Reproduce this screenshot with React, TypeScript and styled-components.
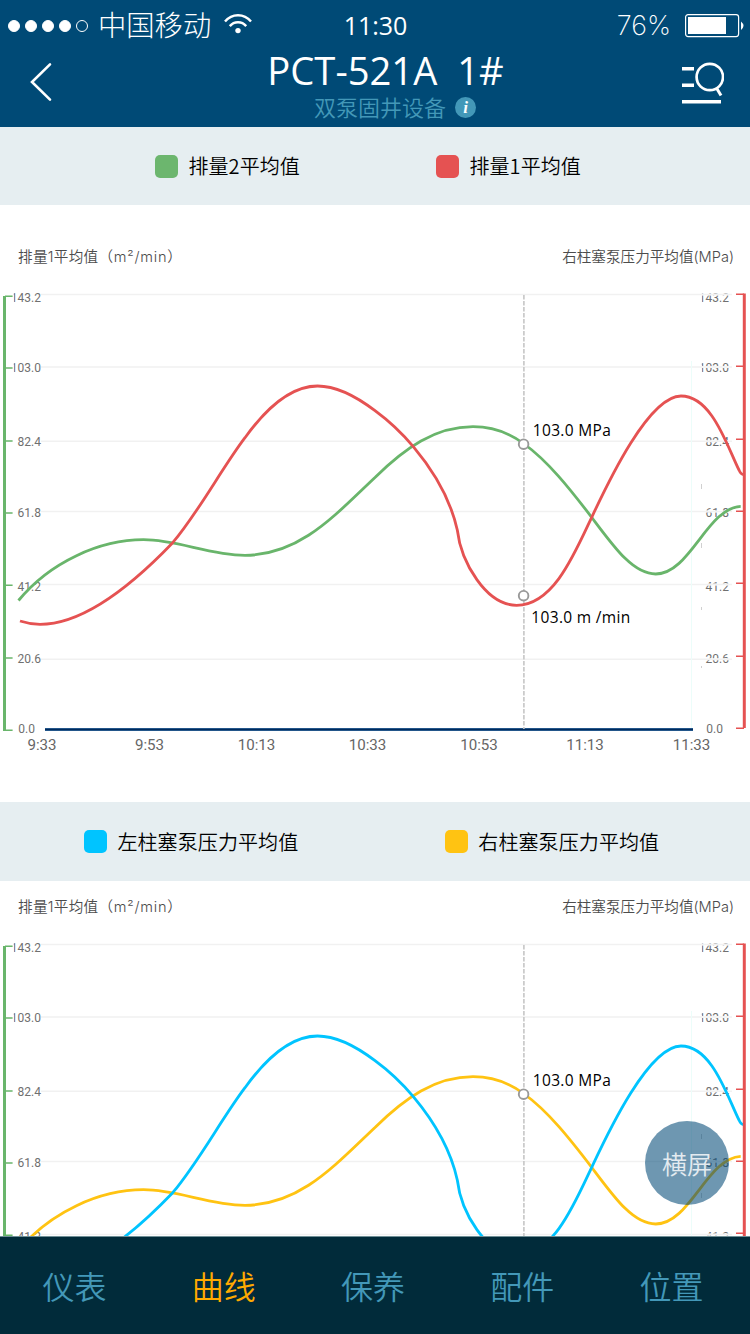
import React from "react";
import styled, { createGlobalStyle } from "styled-components";

const GlobalStyle = createGlobalStyle`
  * { box-sizing: border-box; }
  body { margin: 0; background: #fff; }
`;

const cjk = `"Noto Sans CJK SC", sans-serif`;
const latin = `"Open Sans", "Noto Sans", "Noto Sans CJK SC", sans-serif`;

const Screen = styled.div`
  position: relative;
  display: flex;
  flex-direction: column;
  width: 750px;
  height: 1334px;
  overflow: hidden;
  background: #fff;
  font-family: ${cjk};
`;

const Header = styled.header`
  flex: none;
  height: 127px;
  background: #004a76;
  color: #fff;
`;

const StatusBar = styled.div`
  display: grid;
  grid-template-columns: 1fr auto 1fr;
  align-items: center;
  height: 51px;
  padding: 0 6px 0 8px;
`;

const StatusGroup = styled.div<{ $end?: boolean }>`
  display: flex;
  align-items: center;
  justify-content: ${(p) => (p.$end ? "flex-end" : "flex-start")};
`;

const Signal = styled.div`
  display: flex;
  gap: 5px;
  margin-right: 10px;
`;

const SignalDot = styled.span<{ $on: boolean }>`
  width: 12px;
  height: 12px;
  border: 1px solid #fff;
  border-radius: 50%;
  background: ${(p) => (p.$on ? "#fff" : "transparent")};
`;

const Carrier = styled.span`
  margin-right: 13px;
  padding-bottom: 3px;
  font-size: 28.3px;
  font-weight: 300;
  line-height: 40px;
`;

const Clock = styled.span`
  padding: 0 1px 2px 0;
  font-family: ${latin};
  font-size: 25px;
  line-height: 40px;
`;

const Percent = styled.span`
  margin-right: 14px;
  font-family: Inter, sans-serif;
  font-size: 27px;
  font-weight: 200;
  line-height: 40px;
`;

const TitleBar = styled.div`
  display: grid;
  grid-template-columns: 90px 1fr 90px;
  height: 76px;
`;

const IconButton = styled.button<{ $end?: boolean }>`
  display: flex;
  align-items: flex-start;
  justify-content: ${(p) => (p.$end ? "flex-end" : "flex-start")};
  padding: ${(p) => (p.$end ? "10px 26px 0 0" : "10px 0 0 28px")};
  border: 0;
  background: none;
`;

const TitleBlock = styled.div`
  display: flex;
  flex-direction: column;
  align-items: center;
  padding-left: 21px;
`;

const Title = styled.h1`
  margin: 0;
  font-family: ${latin};
  font-size: 38.2px;
  font-weight: 400;
  line-height: 39px;
  white-space: pre;
`;

const Subtitle = styled.div`
  display: flex;
  align-items: center;
  gap: 9px;
  padding-left: 19px;
  color: #4398b8;
  font-size: 22px;
  font-weight: 350;
  line-height: 32px;
`;

const InfoBadge = styled.span`
  display: flex;
  align-items: center;
  justify-content: center;
  width: 21px;
  height: 21px;
  margin-top: 2px;
  border-radius: 50%;
  background: #4398b8;
  color: #fff;
  font: italic bold 17px/21px "Liberation Serif", serif;
`;

const Content = styled.main`
  flex: 1;
  min-height: 0;
  overflow: hidden;
`;

const Legend = styled.div<{ $height: number; $left: number; $gap: number }>`
  display: flex;
  align-items: center;
  gap: ${(p) => p.$gap}px;
  height: ${(p) => p.$height}px;
  padding-left: ${(p) => p.$left}px;
  background: #e6eef1;
`;

const LegendItem = styled.div`
  display: flex;
  align-items: center;
  gap: 10.4px;
  color: #000;
  font-size: 20px;
  font-weight: 350;
  letter-spacing: 0.1px;
  line-height: 30px;
  white-space: nowrap;
`;

const Swatch = styled.span<{ $color: string }>`
  width: 23px;
  height: 23px;
  border-radius: 5px;
  background: ${(p) => p.$color};
`;

const ChartPanel = styled.section<{ $top: number }>`
  display: flex;
  flex-direction: column;
  padding: ${(p) => p.$top}px 0 42px;
  background: #fff;
`;

const AxisTitles = styled.div`
  display: flex;
  justify-content: space-between;
  height: 35px;
  padding: 1px 16px 0 18px;
  color: #4c4c4c;
  font-family: Inter, ${cjk};
  font-size: 14.6px;
  font-weight: 350;
  line-height: 22px;
  white-space: nowrap;
`;

const Quantity = styled.span`
  letter-spacing: 0.3px;
`;

const Unit = styled.span`
  letter-spacing: 0.75px;
`;

const Plot = styled.svg`
  display: block;
  width: 750px;
  height: 480px;
`;

const TickText = styled.text`
  fill: #707070;
  font: 12px Roboto, sans-serif;
`;

const TimeText = styled.text`
  fill: #666;
  font: 15.1px Roboto, sans-serif;
  text-anchor: middle;
`;

const ValueText = styled.text`
  fill: #000;
  font: 15.5px ${latin};
`;

const TabBar = styled.nav`
  flex: none;
  display: flex;
  height: 98px;
  padding-right: 4px;
  border-top: 1px solid #6f8f96;
  background: #012b3a;
`;

const Tab = styled.a<{ $active?: boolean }>`
  flex: 1 0 0;
  color: ${(p) => (p.$active ? "#ffaa00" : "#4398b8")};
  font-size: 32px;
  font-weight: 350;
  line-height: 97px;
  text-align: center;
`;

const RotateButton = styled.button`
  position: absolute;
  top: 1121px;
  left: 645px;
  width: 84px;
  height: 84px;
  padding: 0;
  border: 0;
  border-radius: 50%;
  background: rgba(0, 72, 117, 0.57);
  color: #e4ebf0;
  font-family: ${cjk};
  font-size: 25px;
  font-weight: 350;
  line-height: 81px;
`;

const FALLING =
  "M18.5 600.5C50 562 100 539.7 143.5 539.7C178 539.7 209 555.3 245 555.3C300 555.3 335 515 375 477.5C405 448 435 426.7 473 426.7C495 426.7 510 433.5 523.5 443.5C548 461 570 489 591.7 517.3C614 547 633 574 655.7 574C690 574 707 508 740.7 506.3";
const RISING =
  "M20 621C26 623 33 624.3 40 624.3C85 624.3 135 582 172.7 542.7C198 513 222 468 245 437.7C270 403 294 386 317.5 386C337 386 357 397 375 410.7C389 421 401 432 413.3 446.7C432 469 450 497 457.3 530C461 562 486 605.3 516.7 605.3C553 605.3 574 555 591.7 517.3C606 487 648 396 681 396C712 396 727 446 739 470Q741 474.6 743.5 474.6";

const TICKS = [
  { label: "143.2", left: 296.3, right: 294.3, grid: 294.5, base: 302 },
  { label: "103.0", left: 368, right: 366.3, grid: 367, base: 372.3 },
  { label: "82.4", left: 441, right: 439.3, grid: 441.3, base: 446.3 },
  { label: "61.8", left: 513, right: 511.3, grid: 511.5, base: 517.3 },
  { label: "41.2", left: 585.3, right: 583.3, grid: 584.5, base: 590.5 },
  { label: "20.6", left: 658, right: 656.3, grid: 659.3, base: 662.7 },
  { label: "0.0", left: 730.3, right: 728.3, grid: 0, base: 733 },
];

const TIMES: [string, number][] = [
  ["9:33", 42],
  ["9:53", 149.5],
  ["10:13", 256.5],
  ["10:33", 367.5],
  ["10:53", 479],
  ["11:13", 585],
  ["11:33", 691.5],
];

interface ChartProps {
  id: string;
  top: number;
  pressure: string;
  flow: string;
}

function Chart({ id, top, pressure, flow }: ChartProps) {
  return (
    <ChartPanel $top={top}>
      <AxisTitles>
        <Quantity>
          排量1平均值<Unit>（m²/min）</Unit>
        </Quantity>
        <span>右柱塞泵压力平均值(MPa)</span>
      </AxisTitles>
      <Plot viewBox="0 280 750 480">
        <defs>
          <clipPath id={`${id}-labels`}>
            <rect x="13.8" y="280" width="40" height="480" />
            <rect x="701.8" y="280" width="40" height="480" />
          </clipPath>
        </defs>
        <g clipPath={`url(#${id}-labels)`}>
          {TICKS.map((t) => {
            const shift = t.label === "0.0" ? 6 : 0;
            return (
              <g key={t.label} textAnchor="end">
                <TickText x={40.9 - shift} y={t.base}>{t.label}</TickText>
                <TickText x={728.9 - shift} y={t.base}>{t.label}</TickText>
              </g>
            );
          })}
        </g>
        {TICKS.filter((t) => t.grid).map((t) => (
          <g key={t.label}>
            <path d={`M700 ${t.grid}H732`} stroke="#fff" strokeWidth="2" />
            <path d={`M41 ${t.grid}H732`} stroke="#f1f1f1" strokeWidth="1.4" />
          </g>
        ))}
        <path d="M691.5 361V728" stroke="#ecfdfa" strokeWidth="1" />
        <path d="M701.5 484v5M701.5 543v5M701.5 607v3M701.5 666v2" stroke="#c4c4c4" strokeWidth="0.8" />

        <path d="M4.5 296V731" stroke="#69b56b" strokeWidth="3" />
        <path d={TICKS.map((t) => `M5 ${t.left}H12.6`).join("")} stroke="#69b56b" strokeWidth="1.4" />
        <path d="M45 729.5H693" stroke="#2f669a" strokeWidth="3" />
        <path d="M45 729.5H693" stroke="#002a5c" strokeWidth="1.4" />

        <path d="M523.9 295V729" stroke="#c6c6c6" strokeWidth="1.6" strokeDasharray="4.4 1.6" />
        <path d={FALLING} fill="none" stroke={flow} strokeWidth="2.8" />
        <path d={RISING} fill="none" stroke={pressure} strokeWidth="2.8" />
        <path d="M744.3 293.6V728" stroke="#e55252" strokeWidth="3" />
        <path d={TICKS.map((t) => `M736 ${t.right}H744`).join("")} stroke="#e55252" strokeWidth="1.4" />

        <circle cx="523.6" cy="444.2" r="4.8" fill="#fff" stroke="#999" strokeWidth="1.9" />
        <circle cx="523.6" cy="595.7" r="4.8" fill="#fff" stroke="#999" strokeWidth="1.9" />
        <ValueText x="532.8" y="435.6" textLength="78">103.0 MPa</ValueText>
        <ValueText x="531.3" y="622.7" textLength="99">103.0 m /min</ValueText>

        {TIMES.map(([label, x]) => (
          <TimeText key={label} x={x} y="749.6">{label}</TimeText>
        ))}
      </Plot>
    </ChartPanel>
  );
}

const TABS = ["仪表", "曲线", "保养", "配件", "位置"];

export default function App() {
  return (
    <Screen>
      <GlobalStyle />
      <Header>
        <StatusBar>
          <StatusGroup>
            <Signal>
              {[0, 1, 2, 3, 4].map((i) => (
                <SignalDot key={i} $on={i < 4} />
              ))}
            </Signal>
            <Carrier>中国移动</Carrier>
            <svg width="28" height="23" viewBox="0 0 28 23" fill="none" stroke="#fff">
              <path d="M1 7.6C8 -.9 20 -.9 27 7.6" strokeWidth="2.4" />
              <path d="M5.8 12.1C10.2 6.9 17.8 6.9 22.2 12.1" strokeWidth="2.4" />
              <circle cx="14" cy="16.6" r="2.7" fill="#fff" stroke="none" />
            </svg>
          </StatusGroup>
          <Clock>11:30</Clock>
          <StatusGroup $end>
            <Percent>76%</Percent>
            <svg width="59" height="24" viewBox="0 0 59 24">
              <rect x=".6" y=".6" width="53" height="22" rx="2.5" fill="none" stroke="#fff" strokeWidth="1.2" />
              <rect x="3" y="3" width="38" height="17" fill="#fff" />
              <path d="M56 7.5Q61 11.8 56 16Z" fill="#fff" />
            </svg>
          </StatusGroup>
        </StatusBar>
        <TitleBar>
          <IconButton>
            <svg width="26" height="42" viewBox="0 0 26 42" fill="none" stroke="#fff" strokeWidth="2.6" strokeLinecap="round">
              <path d="M22 3.4L4 21L22 38.6" />
            </svg>
          </IconButton>
          <TitleBlock>
            <Title>{"PCT-521A  1#"}</Title>
            <Subtitle>
              双泵固井设备<InfoBadge>i</InfoBadge>
            </Subtitle>
          </TitleBlock>
          <IconButton $end>
            <svg width="42" height="44" viewBox="0 0 42 44" fill="none" stroke="#fff" strokeWidth="3.4">
              <path d="M0 7.7H12M0 24.3H12M0 40.8H39" />
              <circle cx="27.8" cy="16" r="13.2" strokeWidth="2.7" />
              <path d="M34.5 27L39 34.6" strokeWidth="3" />
            </svg>
          </IconButton>
        </TitleBar>
      </Header>
      <Content>
        <Legend $height={78} $left={155} $gap={136}>
          <LegendItem><Swatch $color="#6cb66e" />排量2平均值</LegendItem>
          <LegendItem><Swatch $color="#e55252" />排量1平均值</LegendItem>
        </Legend>
        <Chart id="flow" top={40} pressure="#e55252" flow="#69b56b" />
        <Legend $height={79} $left={84} $gap={146.6}>
          <LegendItem><Swatch $color="#00c4ff" />左柱塞泵压力平均值</LegendItem>
          <LegendItem><Swatch $color="#ffc312" />右柱塞泵压力平均值</LegendItem>
        </Legend>
        <Chart id="pump" top={14} pressure="#00c4ff" flow="#ffc312" />
      </Content>
      <TabBar>
        {TABS.map((label) => (
          <Tab key={label} $active={label === "曲线"}>{label}</Tab>
        ))}
      </TabBar>
      <RotateButton>横屏</RotateButton>
    </Screen>
  );
}
